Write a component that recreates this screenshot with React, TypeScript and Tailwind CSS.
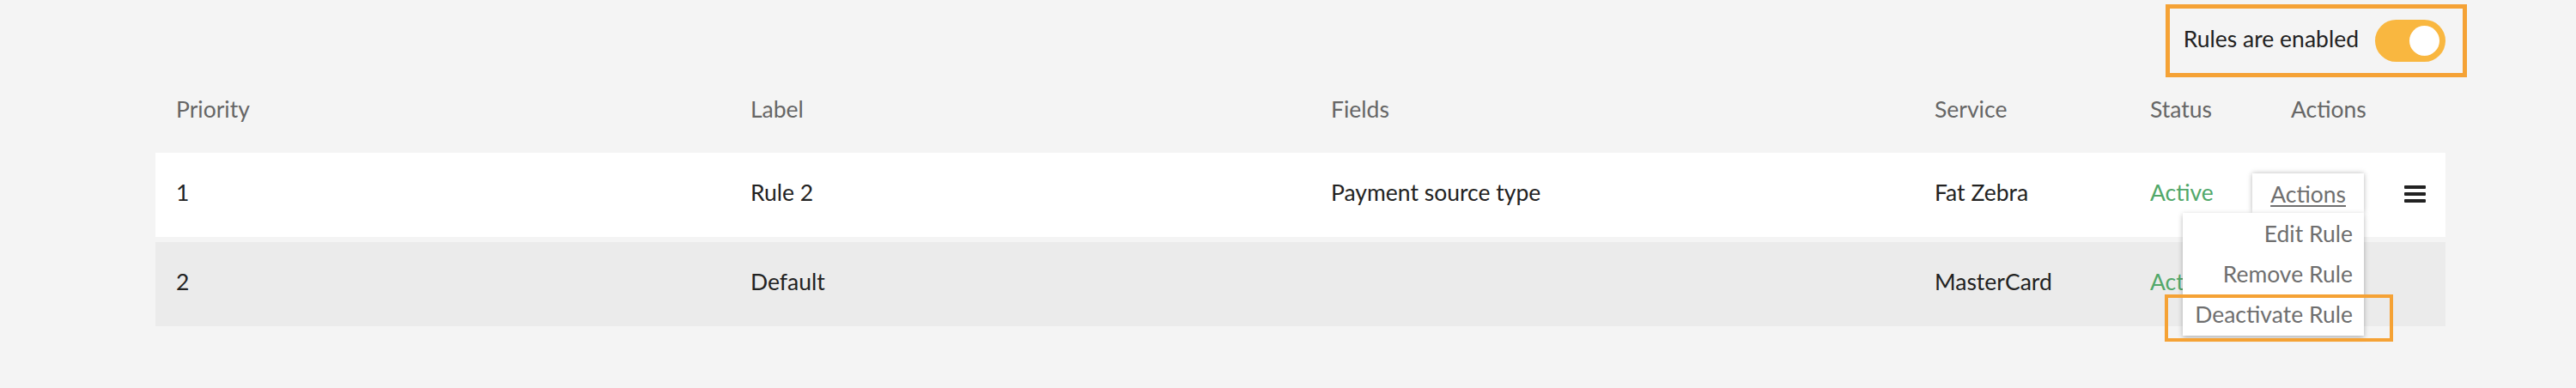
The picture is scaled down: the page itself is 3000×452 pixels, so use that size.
import { useState } from 'react';

interface Rule {
  priority: number;
  label: string;
  fields: string;
  service: string;
  status: string;
}

const rules: Rule[] = [
  { priority: 1, label: 'Rule 2', fields: 'Payment source type', service: 'Fat Zebra', status: 'Active' },
  { priority: 2, label: 'Default', fields: '', service: 'MasterCard', status: 'Active' },
];

const cols = 'grid grid-cols-[669px_676px_703px_251px_164px_1fr] items-center';

function Toggle({ on, onChange }: { on: boolean; onChange: () => void }) {
  return (
    <button
      onClick={onChange}
      className={`w-[82px] h-[49px] rounded-full flex items-center px-[7px] ${on ? 'bg-[#f9b740] justify-end' : 'bg-[#cfcfcf] justify-start'}`}
    >
      <span className="block w-[35px] h-[35px] rounded-full bg-white" />
    </button>
  );
}

function ActionsMenu() {
  return (
    <div className="absolute right-[95px] top-[24px] flex flex-col items-end z-10">
      <div className="w-[130px] h-[46px] bg-white shadow-[0_0_6px_rgba(0,0,0,0.28)] flex items-end justify-end pr-[21px] pb-[1px]">
        <span className="underline underline-offset-[3px] decoration-[2px] text-[#6f6f6f]">Actions</span>
      </div>
      <div className="relative w-[211px] bg-white shadow-[0_2px_6px_rgba(0,0,0,0.28)] pb-[2px] text-[#6f6f6f]">
        {['Edit Rule', 'Remove Rule', 'Deactivate Rule'].map(item => (
          <div key={item} className="h-[47px] flex items-center justify-end pr-[13px] pt-[2px]">
            {item}
          </div>
        ))}
      </div>
      <div className="absolute left-[-21px] top-[141px] w-[266px] h-[55px] border-[4px] border-[#f5a235]" />
    </div>
  );
}

export default function App() {
  const [enabled, setEnabled] = useState(true);

  return (
    <div className="min-h-[452px] bg-[#f4f4f4] text-[26.5px] text-[#222] font-['Lato','Liberation_Sans',sans-serif] overflow-hidden">
      <div className="flex justify-end pt-[5px] pr-[127px]">
        <div className="h-[85px] border-[5px] border-[#f5a235] flex items-center pl-[16px] pr-[20px] gap-[19px]">
          <span className="text-[#222] pb-[3px]">Rules are enabled</span>
          <Toggle on={enabled} onChange={() => setEnabled(!enabled)} />
        </div>
      </div>

      <div className="ml-[181px] mr-[152px]">
        <div className={`${cols} h-[76px] text-[#666]`}>
          <div className="px-6">Priority</div>
          <div className="px-6">Label</div>
          <div className="px-6">Fields</div>
          <div className="px-6">Service</div>
          <div className="px-6">Status</div>
          <div className="px-6">Actions</div>
        </div>

        <div className="mt-[12px] flex flex-col gap-[6px]">
          {rules.map((rule, i) => (
            <div key={rule.priority} className={`${cols} h-[98px] ${i === 0 ? 'bg-white' : 'bg-[#ebebeb]'}`}>
              <div className="px-6 pb-[5px]">{rule.priority}</div>
              <div className="px-6 pb-[5px]">{rule.label}</div>
              <div className="px-6 pb-[5px]">{rule.fields}</div>
              <div className="px-6 pb-[5px]">{rule.service}</div>
              <div className="px-6 pb-[5px] text-[#52a86a]">{rule.status}</div>
              <div className="relative h-full flex items-center justify-end pr-[23px]">
                {i === 0 && (
                  <>
                    <svg width="25" height="21" viewBox="0 0 25 21" className="mb-[4px]">
                      <rect x="0" y="1" width="25" height="4" rx="1" fill="#222" />
                      <rect x="0" y="9" width="25" height="4" rx="1" fill="#222" />
                      <rect x="0" y="17" width="25" height="4" rx="1" fill="#222" />
                    </svg>
                    <ActionsMenu />
                  </>
                )}
              </div>
            </div>
          ))}
        </div>
      </div>
    </div>
  );
}
